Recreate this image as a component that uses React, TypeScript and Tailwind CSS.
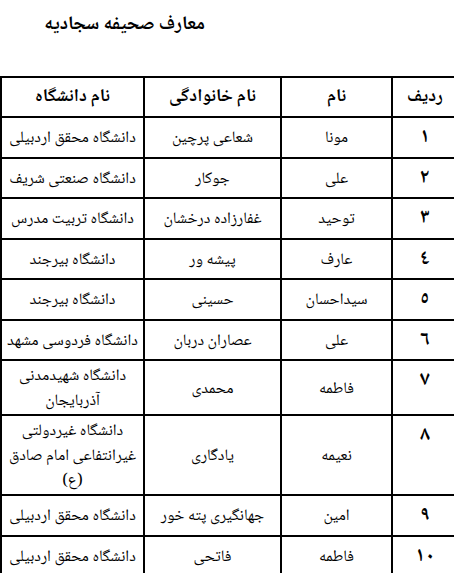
const rows: { n: string; name: string; family: string; uni: string[] }[] = [
  { n: "١", name: "مونا", family: "شعاعی پرچین", uni: ["دانشگاه محقق اردبیلی"] },
  { n: "٢", name: "علی", family: "جوکار", uni: ["دانشگاه صنعتی شریف"] },
  { n: "٣", name: "توحید", family: "غفارزاده درخشان", uni: ["دانشگاه تربیت مدرس"] },
  { n: "٤", name: "عارف", family: "پیشه ور", uni: ["دانشگاه بیرجند"] },
  { n: "٥", name: "سیداحسان", family: "حسینی", uni: ["دانشگاه بیرجند"] },
  { n: "٦", name: "علی", family: "عصاران دربان", uni: ["دانشگاه فردوسی مشهد"] },
  { n: "٧", name: "فاطمه", family: "محمدی", uni: ["دانشگاه شهیدمدنی", "آذربایجان"] },
  { n: "٨", name: "نعیمه", family: "یادگاری", uni: ["دانشگاه غیردولتی", "غیرانتفاعی امام صادق", "(ع)"] },
  { n: "٩", name: "امین", family: "جهانگیری پته خور", uni: ["دانشگاه محقق اردبیلی"] },
  { n: "١٠", name: "فاطمه", family: "فاتحی", uni: ["دانشگاه محقق اردبیلی"] },
];

const font = "font-['Noto_Naskh_Arabic','DejaVu_Sans',sans-serif]";

export default function App() {
  return (
    <div className={`h-[573px] w-[454px] overflow-hidden bg-white text-black ${font}`}>
      <div dir="rtl" className="w-[205px] pt-[12px] text-[19px] font-bold leading-[26px]">
        معارف صحیفه سجادیه
      </div>

      <table dir="rtl" className="mt-[38px] w-[457px] table-fixed border-collapse text-[16px]">
        <colgroup>
          <col className="w-[66px]" />
          <col className="w-[111px]" />
          <col className="w-[137px]" />
          <col className="w-[143px]" />
        </colgroup>
        <thead>
          <tr className="h-[40px] text-[18px] font-bold">
            <th className="border-2 border-black">ردیف</th>
            <th className="border-2 border-black">نام</th>
            <th className="border-2 border-black">نام خانوادگی</th>
            <th className="border-2 border-black">نام دانشگاه</th>
          </tr>
        </thead>
        <tbody>
          {rows.map((r) => (
            <tr key={r.n} className="h-[40.5px] text-center">
              <td className="border-2 border-black pt-[3px] align-top text-[20px] font-bold leading-[35px]">{r.n}</td>
              <td className="border-2 border-black pt-[3px] leading-[25px]">{r.name}</td>
              <td className="border-2 border-black pt-[3px] leading-[25px]">{r.family}</td>
              <td className="border-2 border-black px-1 pt-[3px] leading-[25px]">
                {r.uni.map((line) => (
                  <div key={line}>{line}</div>
                ))}
              </td>
            </tr>
          ))}
        </tbody>
      </table>
    </div>
  );
}
